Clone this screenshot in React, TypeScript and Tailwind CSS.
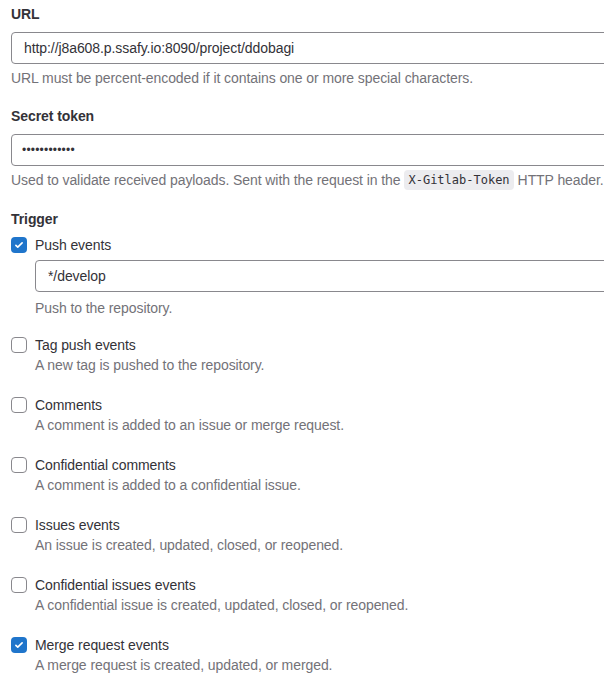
import React from "react";

const triggers = [
  { title: "Tag push events", desc: "A new tag is pushed to the repository.", checked: false },
  { title: "Comments", desc: "A comment is added to an issue or merge request.", checked: false },
  { title: "Confidential comments", desc: "A comment is added to a confidential issue.", checked: false },
  { title: "Issues events", desc: "An issue is created, updated, closed, or reopened.", checked: false },
  { title: "Confidential issues events", desc: "A confidential issue is created, updated, closed, or reopened.", checked: false },
  { title: "Merge request events", desc: "A merge request is created, updated, or merged.", checked: true },
];

function Checkbox({ checked }: { checked: boolean }) {
  return checked ? (
    <span className="flex h-4 w-4 shrink-0 items-center justify-center rounded-[4px] bg-[#1f75cb]">
      <svg viewBox="0 0 16 16" className="h-2.5 w-2.5" fill="none">
        <path d="M3 8.5l3 3 7-7" stroke="white" strokeWidth="2.6" strokeLinecap="round" strokeLinejoin="round" />
      </svg>
    </span>
  ) : (
    <span className="h-4 w-4 shrink-0 rounded-[4px] border border-[#89888d] bg-white" />
  );
}

export default function App() {
  return (
    <div
      className="w-[604px] h-[681px] overflow-hidden bg-white pl-[11px] text-[14px] leading-5 tracking-[-0.08px] text-[#333238]"
      style={{ fontFamily: '"Liberation Sans", Arial, sans-serif' }}
    >
      <div className="pt-1 font-bold">URL</div>
      <input
        readOnly
        value="http://j8a608.p.ssafy.io:8090/project/ddobagi"
        className="mt-2 block h-8 w-[640px] rounded-[4px] border border-[#89888d] px-3 text-[14px] text-[#333238] outline-none"
      />
      <div className="mt-1 text-[#737278]">URL must be percent-encoded if it contains one or more special characters.</div>

      <div className="mt-[18px] font-bold">Secret token</div>
      <input
        readOnly
        type="password"
        value="123456789012"
        className="mt-2 block h-8 w-[640px] rounded-[4px] border border-[#89888d] pl-[10px] pr-3 text-[12px] tracking-[0.2px] text-[#333238] outline-none"
      />
      <div className="mt-1 flex items-center whitespace-nowrap text-[#737278]">
        Used to validate received payloads. Sent with the request in the
        <code
          className="mx-1 rounded-[4px] bg-[#ececef] px-1 text-[12px] leading-5 tracking-normal text-[#333238]"
          style={{ fontFamily: '"DejaVu Sans Mono", monospace' }}
        >
          X-Gitlab-Token
        </code>
        HTTP header.
      </div>

      <div className="mt-[19px] font-bold">Trigger</div>
      <div className="mt-1.5 flex items-center gap-2">
        <Checkbox checked />
        <span>Push events</span>
      </div>
      <div className="pl-6">
        <input
          readOnly
          value="*/develop"
          className="mt-[5px] block h-8 w-[600px] rounded-[4px] border border-[#89888d] px-3 text-[14px] text-[#333238] outline-none"
        />
        <div className="mt-1.5 text-[#737278]">Push to the repository.</div>
      </div>

      <div className="mt-[17px] flex flex-col gap-5">
        {triggers.map((t) => (
          <div key={t.title}>
            <div className="flex items-center gap-2">
              <Checkbox checked={t.checked} />
              <span>{t.title}</span>
            </div>
            <div className="pl-6 text-[#737278]">{t.desc}</div>
          </div>
        ))}
      </div>
    </div>
  );
}
